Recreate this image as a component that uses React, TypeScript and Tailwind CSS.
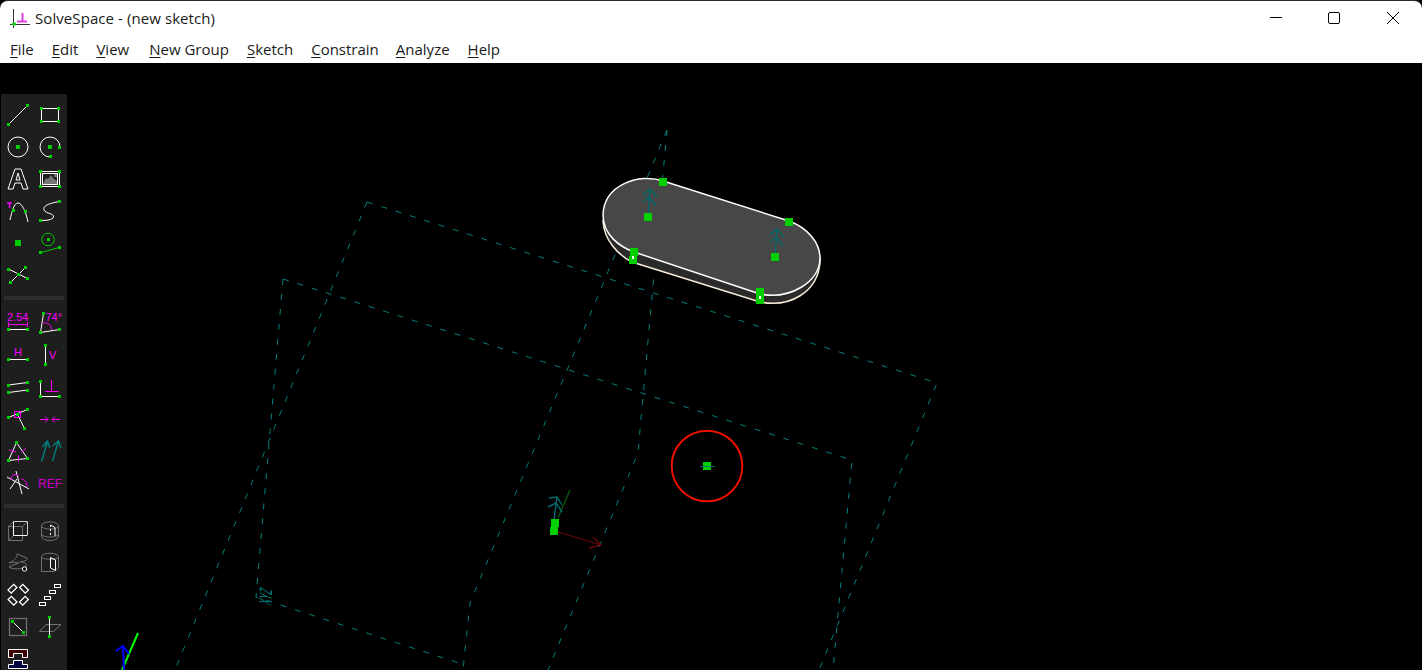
import React from 'react';

const GREEN = '#00cc00';
const MAG = '#ff00ff';
const TEAL = '#008080';
const GREY = '#707070';

// green handle square, centered on a point
const Pt = ({ x, y, s = 3 }: { x: number; y: number; s?: number }) => (
  <rect x={Math.round(x - s / 2)} y={Math.round(y - s / 2)} width={s} height={s} fill={GREEN} />
);

const L = ({ d, c = 'white', w = 1 }: { d: string; c?: string; w?: number }) => (
  <path d={d} stroke={c} strokeWidth={w} fill="none" />
);

const Label = ({ x, y, size = 11, fill = MAG, children }: { x: number; y: number; size?: number; fill?: string; children: string }) => (
  <text x={x} y={y} fontSize={size} fill={fill} className="font-['Liberation_Sans',sans-serif]">
    {children}
  </text>
);

const Icon = ({ children, label }: { children: React.ReactNode; label: string }) => (
  <div className="flex h-8 w-8 items-center justify-center" title={label}>
    <svg width="32" height="32" viewBox="0 0 32 32">
      {children}
    </svg>
  </div>
);

const sketchTools: [string, React.ReactNode][] = [
  ['line', <><L d="M6.5 25.5L25.5 6.5" /><Pt x={6.5} y={25.5} /><Pt x={25.5} y={6.5} /></>],
  ['rectangle', <><L d="M7.5 9.5H24.5V22.5H7.5Z" /><Pt x={7.5} y={9.5} /><Pt x={24.5} y={9.5} /><Pt x={7.5} y={22.5} /><Pt x={24.5} y={22.5} /></>],
  ['circle', <><circle cx="16" cy="16" r="10" stroke="white" fill="none" /><Pt x={16} y={16} s={4} /></>],
  ['arc', <><path d="M26 16A10 10 0 1 0 16 26" stroke="white" fill="none" /><Pt x={16} y={16} s={4} /><Pt x={25.5} y={16.5} /><Pt x={16.5} y={25.5} /></>],
  ['text', <path d="M6 26L13 6H19L26 26H21L19 20H13L11 26ZM14 17H18L16 10Z" stroke="white" fill="none" />],
  ['image', <><rect x="6.5" y="8.5" width="19" height="15" stroke="white" fill="none" /><rect x="8.5" y="10.5" width="15" height="11" stroke="white" fill="none" /><path d="M9 21L12 15L14 16L17 12L19 15L23 18V21ZM20 11H23V14H20Z" fill="#777" /><Pt x={6.5} y={8.5} /><Pt x={25.5} y={8.5} /><Pt x={6.5} y={23.5} /><Pt x={25.5} y={23.5} /></>],
  ['tangent arc', <><L d="M5 8H10M7.5 8V13" c={MAG} w={1.4} /><path d="M8 25C10 16 12 8 16 8C20 8 24 17 26 27" stroke="white" fill="none" /><Pt x={11.5} y={15.5} /><Pt x={23.5} y={16.5} /></>],
  ['cubic', <><path d="M7 25.5C12 25.5 19 25 19.5 22C20 18 12 19 10 15C9 11 13 9 25 6.5" stroke="white" fill="none" /><Pt x={6.5} y={25.5} /><Pt x={25.5} y={6.5} /></>],
  ['datum point', <Pt x={16} y={16} s={6} />],
  ['workplane', <><circle cx="14" cy="12.5" r="6.3" stroke={GREEN} fill="none" /><Pt x={14} y={12.5} /><path d="M7 25.5L25 20.5" stroke={GREEN} /><Pt x={6.5} y={25.5} /><Pt x={25.5} y={20.5} /></>],
  ['split', <><path d="M6.5 10L25.5 19.5M23.5 8.5L8.5 23.5" stroke="white" /><Pt x={6.5} y={10.5} /><Pt x={23.5} y={8.5} /><Pt x={25.5} y={19.5} /><Pt x={8.5} y={23.5} /><Pt x={16.5} y={15.5} /></>],
];

const constraintTools: [string, React.ReactNode][] = [
  ['distance', <><Label x={5} y={15}>2.54</Label><L d="M6.5 16V21M6.5 18.5H25.5M25.5 16V21" c={MAG} /><L d="M6 23.5H25" /><Pt x={6.5} y={23.5} /><Pt x={25.5} y={23.5} /></>],
  ['angle', <><Label x={11.5} y={15}>74°</Label><path d="M6.5 26.5L9.5 7.5M6.5 26.5L25.5 23.5" stroke="white" /><path d="M8.5 17C14 16 17.5 19 17.5 24" stroke={MAG} fill="none" /><Pt x={6.5} y={26.5} /><Pt x={9.5} y={7.5} /><Pt x={25.5} y={23.5} /></>],
  ['horizontal', <><Label x={12} y={18}>H</Label><L d="M6 21.5H26" /><Pt x={6.5} y={21.5} /><Pt x={25.5} y={21.5} /></>],
  ['vertical', <><Label x={15} y={21}>V</Label><L d="M11.5 7V26" /><Pt x={11.5} y={7.5} /><Pt x={11.5} y={26.5} /></>],
  ['parallel', <><path d="M6.5 15L25.5 12.5M6.5 22.5L25.5 20" stroke="white" /><Pt x={6.5} y={15} /><Pt x={25.5} y={12.5} /><Pt x={6.5} y={22.5} /><Pt x={25.5} y={20} /></>],
  ['perpendicular', <><L d="M6.5 11V26.5H26" /><L d="M17.5 10V21.5M11 21.5H24.5" c={MAG} /><Pt x={6.5} y={11.5} /><Pt x={25.5} y={26.5} /><Pt x={6.5} y={26.5} /></>],
  ['point on', <><path d="M6.5 15.5L25.5 7.5M15.5 12.5L22.5 26.5" stroke="white" /><rect x="12.5" y="9.5" width="6" height="6" stroke={MAG} fill="none" /><Pt x={6.5} y={15.5} /><Pt x={25.5} y={7.5} /><Pt x={22.5} y={26.5} /><Pt x={15.5} y={12.5} /></>],
  ['coincident', <L d="M6 17.5H14M11 14.5L14 17.5L11 20.5M26 17.5H18M21 14.5L18 17.5L21 20.5" c={MAG} />],
  ['equal', <><path d="M14.5 8.5L6.5 26.5L25.5 24.5Z" stroke="white" fill="none" /><path d="M7 16L14 18M19 18.5L24 14.5M16.5 21.5V27.5" stroke={MAG} /><Pt x={14.5} y={8.5} /><Pt x={6.5} y={26.5} /><Pt x={25.5} y={24.5} /></>],
  ['normal', <path d="M7.5 27.5L13.5 7.5M8.5 13L13.5 7L16 14M18.5 27L24.5 7M18.5 12L24.5 7L27 14" stroke={TEAL} fill="none" strokeWidth="1.4" />],
  ['other angle', <><path d="M5 11L27 23M14 5L20 28M8 23L15 13" stroke="white" /><path d="M9.5 14C8 8 15 7 17 11M19 13C23 13 25 17 25 21" stroke={MAG} fill="none" /></>],
  ['ref', <Label x={4} y={21.5} size={12} fill="#c800c8">REF</Label>],
];

const groupTools: [string, React.ReactNode][] = [
  ['extrude', <><L d="M6.5 12.5H20.5V26.5H6.5ZM6.5 12.5L11.5 7.5M20.5 12.5L25.5 7.5M6.5 26.5L11.5 21.5" c={GREY} /><L d="M11.5 7.5H25.5V21.5" c="#cccccc" /><L d="M11.5 8V21.5H25" c="white" /></>],
  ['lathe', <><path d="M7.5 12C7.5 6.5 24.5 6.5 24.5 12V22C24.5 28 7.5 28 7.5 22ZM7.5 12C7.5 16 24.5 16 24.5 12M7.5 20C7.5 24 24.5 24 24.5 20" stroke={GREY} fill="none" /><L d="M16.5 11L21 13.5V22" c="white" /><path d="M16.5 11V23" stroke="white" strokeDasharray="2 2" /></>],
  ['revolve', <><path d="M7 17C11 15 15 13 15 8L25 12C26 14 24 15 18 16C24 16 25 19 24 21C18 23 12 24 7 21C9 19 13 19 17 17C13 16 10 16 7 17Z" stroke={GREY} fill="none" /><circle cx="22.5" cy="23" r="2.2" stroke="white" fill="black" /></>],
  ['helix', <><path d="M7.5 11C7.5 6 24.5 6 24.5 11V22L20 25.5H7.5ZM7.5 11C7.5 14 24.5 14 24.5 11" stroke={GREY} fill="none" /><L d="M16.5 11.5L21.5 14V24.5L16.5 22Z" /></>],
  ['step rotating', <g stroke="white" fill="none" strokeWidth="1.3">
    <rect x="6.5" y="8.5" width="8" height="4.5" transform="rotate(-45 10.5 10.8)" />
    <rect x="18" y="8.5" width="8" height="4.5" transform="rotate(45 22 10.8)" />
    <rect x="6.5" y="20.5" width="8" height="4.5" transform="rotate(45 10.5 22.8)" />
    <rect x="18" y="20.5" width="8" height="4.5" transform="rotate(-45 22 22.8)" />
  </g>],
  ['step translating', <g stroke="white" fill="none"><rect x="5.5" y="24.5" width="6" height="3" /><rect x="10.5" y="18.5" width="6" height="3" /><rect x="15.5" y="12.5" width="6" height="3" /><rect x="20.5" y="6.5" width="6" height="3" /></g>],
  ['assemble', <><rect x="7.5" y="8.5" width="17" height="17" stroke={GREY} strokeWidth="1.3" fill="none" /><path d="M10.5 11.5L21.5 22.5" stroke="white" /><Pt x={10.5} y={11.5} /><Pt x={21.5} y={22.5} /></>],
  ['workplane group', <><path d="M12 14.5H27L19.5 21.5H5.5Z" stroke={GREY} fill="none" /><L d="M15.5 7V26" /><Pt x={15.5} y={7.5} /><Pt x={15.5} y={26.5} /></>],
  ['nearest iso', <><path d="M6.5 7.5H25.5V15.5H20.5V11.5H11.5V15.5H6.5Z" stroke="white" fill="#3d0000" /><path d="M6.5 26.5V22.5H11.5V18.5H20.5V22.5H25.5V26.5Z" stroke="white" fill="#000040" /></>],
];

const ToolGrid = ({ tools }: { tools: [string, React.ReactNode][] }) => (
  <div className="grid w-16 grid-cols-2">
    {tools.map(([name, icon]) => (
      <Icon key={name} label={name}>
        {icon}
      </Icon>
    ))}
  </div>
);

const menus: [string, string][] = [
  ['File', ''],
  ['Edit', ''],
  ['View', 'mr-[2px]'],
  ['New Group', ''],
  ['Sketch', ''],
  ['Constrain', 'mr-[-1px]'],
  ['Analyze', ''],
  ['Help', ''],
];

// normal arrow drawn up from a handle
const Normal = ({ x, y }: { x: number; y: number }) => (
  <path
    d={`M${x} ${y}L${x + 2} ${y - 28}M${x - 5} ${y - 22}L${x + 2} ${y - 28}L${x + 9} ${y - 20}M${x - 5} ${y - 15}L${x + 1} ${y - 20}L${x + 8} ${y - 11}`}
    stroke="#046a6a"
    strokeWidth="1.4"
    fill="none"
  />
);

const Handle = ({ x, y }: { x: number; y: number }) => <rect x={x - 4} y={y - 4} width={8} height={8} fill="#00d000" />;

export default function App() {
  return (
    <div className="flex h-[670px] w-[1422px] flex-col overflow-hidden bg-black font-['Open_Sans','Liberation_Sans',sans-serif] text-[#1a1a1a]">
      {/* title bar */}
      <div className="flex h-8 shrink-0 items-center rounded-t-lg border-t border-[#2b2b2b] bg-white pl-[10px] pt-[3px]">
        <svg width="20" height="20" viewBox="0 0 20 20">
          <path d="M3.5 1V20M0 16.5H20" stroke="#333" strokeWidth="1" fill="none" />
          <path d="M12.5 5V13M7 13.5H17" stroke="#e040e0" strokeWidth="2" fill="none" />
          <circle cx="4" cy="16" r="2" fill="#22cc22" />
        </svg>
        <span className="ml-[5px] text-[15px] tracking-[0.08px]">SolveSpace - (new sketch)</span>
        <div className="ml-auto flex">
          <div className="flex h-7 w-[60px] items-center justify-center">
            <svg width="12" height="12" viewBox="0 0 12 12"><path d="M0 5.5H12" stroke="black" /></svg>
          </div>
          <div className="flex h-7 w-14 items-center justify-center">
            <svg width="12" height="12" viewBox="0 0 12 12"><rect x=".5" y=".5" width="11" height="11" rx="1.5" stroke="black" fill="none" /></svg>
          </div>
          <div className="flex h-7 w-[60px] items-center justify-center pl-[2px]">
            <svg width="12" height="12" viewBox="0 0 12 12"><path d="M0 0L12 12M12 0L0 12" stroke="black" /></svg>
          </div>
        </div>
      </div>

      {/* menu bar */}
      <div className="flex h-[31px] shrink-0 items-center gap-[18px] bg-white pl-[10px] pt-1 text-[15px]">
        {menus.map(([name, extra]) => (
          <span key={name} className={extra}>
            <span className="underline underline-offset-2">{name[0]}</span>
            {name.slice(1)}
          </span>
        ))}
      </div>

      {/* canvas */}
      <div className="relative flex-1 overflow-hidden">
        <svg className="absolute inset-0" width="1422" height="607" viewBox="0 63 1422 607">
          {/* workplanes and construction lines */}
          <g stroke="#008080" strokeWidth="1" strokeDasharray="6 9" fill="none">
            <path d="M367 202L937 383L819 670" />
            <path d="M367 202L175 670" />
            <path d="M283 279L852 460L833 670" />
            <path d="M283 279L256 597L465 665" />
            <path d="M667 130L470 603L463 670" />
            <path d="M667 130L640 430L638 453L548 670" />
          </g>
          <text
            transform="matrix(0.08 -1 2.2 0.66 271 606)"
            fontSize="8"
            fill="#008080"
            className="font-['Liberation_Sans',sans-serif]"
          >
            XYZ
          </text>

          {/* extruded slot */}
          <path
            d="M603 221C604 240 618 255 632 262L760 302C790 308 818 292 820 262L820 258L640 230Z"
            fill="#2a2a2a"
            stroke="#f4ead8"
            strokeWidth="1.5"
          />
          <path
            d="M663 181L789 221C808 228 820 243 820 258C820 282 790 300 760 294L634 252C620 247 603 235 603 215C604 184 640 173 663 181Z"
            fill="#474747"
            stroke="white"
            strokeWidth="1.5"
          />
          <Normal x={648} y={217} />
          <Normal x={775} y={257} />
          <Handle x={663} y={182} />
          <Handle x={789} y={222} />
          <Handle x={648} y={217} />
          <Handle x={775} y={257} />
          <Handle x={634} y={252} />
          <Handle x={633} y={260} />
          <Handle x={760} y={292} />
          <Handle x={760} y={300} />
          <rect x="632" y="256" width="2" height="3" fill="white" />
          <rect x="759" y="296" width="2" height="3" fill="white" />

          {/* origin point */}
          <circle cx="707" cy="466" r="35.3" stroke="#ee1100" strokeWidth="2" fill="none" />
          <Handle x={707} y={466} />
          <path d="M700 466.5H715" stroke="#007070" />

          {/* reference csys */}
          <path d="M558 518L570 490" stroke="#0a5a0a" strokeWidth="1.3" />
          <path d="M558 532L601 545M593 537L601 545L589 548" stroke="#6a0808" strokeWidth="1.3" fill="none" />
          <path d="M554 520L557 497M549 498L557 497L562 505M548 507L556 503L562 512" stroke="#046a6a" strokeWidth="1.4" fill="none" />
          <Handle x={555} y={523} />
          <Handle x={554} y={531} />

          {/* axis widget */}
          <path d="M122 670L138 633" stroke="#00ff00" strokeWidth="2" />
          <path d="M124 670L123 646M116 651L123 646L129 654" stroke="#0000ff" strokeWidth="2" fill="none" />
        </svg>

        {/* toolbar */}
        <div className="absolute bottom-0 left-px top-[31px] flex w-[66px] flex-col items-center overflow-hidden bg-[#1e1e1e] pt-[5px]">
          <ToolGrid tools={sketchTools} />
          <div className="mb-[6px] mt-[5px] h-1 w-[60px] shrink-0 bg-[#2e2e2e]" />
          <ToolGrid tools={constraintTools} />
          <div className="my-[6px] h-1 w-[60px] shrink-0 bg-[#2e2e2e]" />
          <ToolGrid tools={groupTools} />
        </div>
      </div>
    </div>
  );
}
